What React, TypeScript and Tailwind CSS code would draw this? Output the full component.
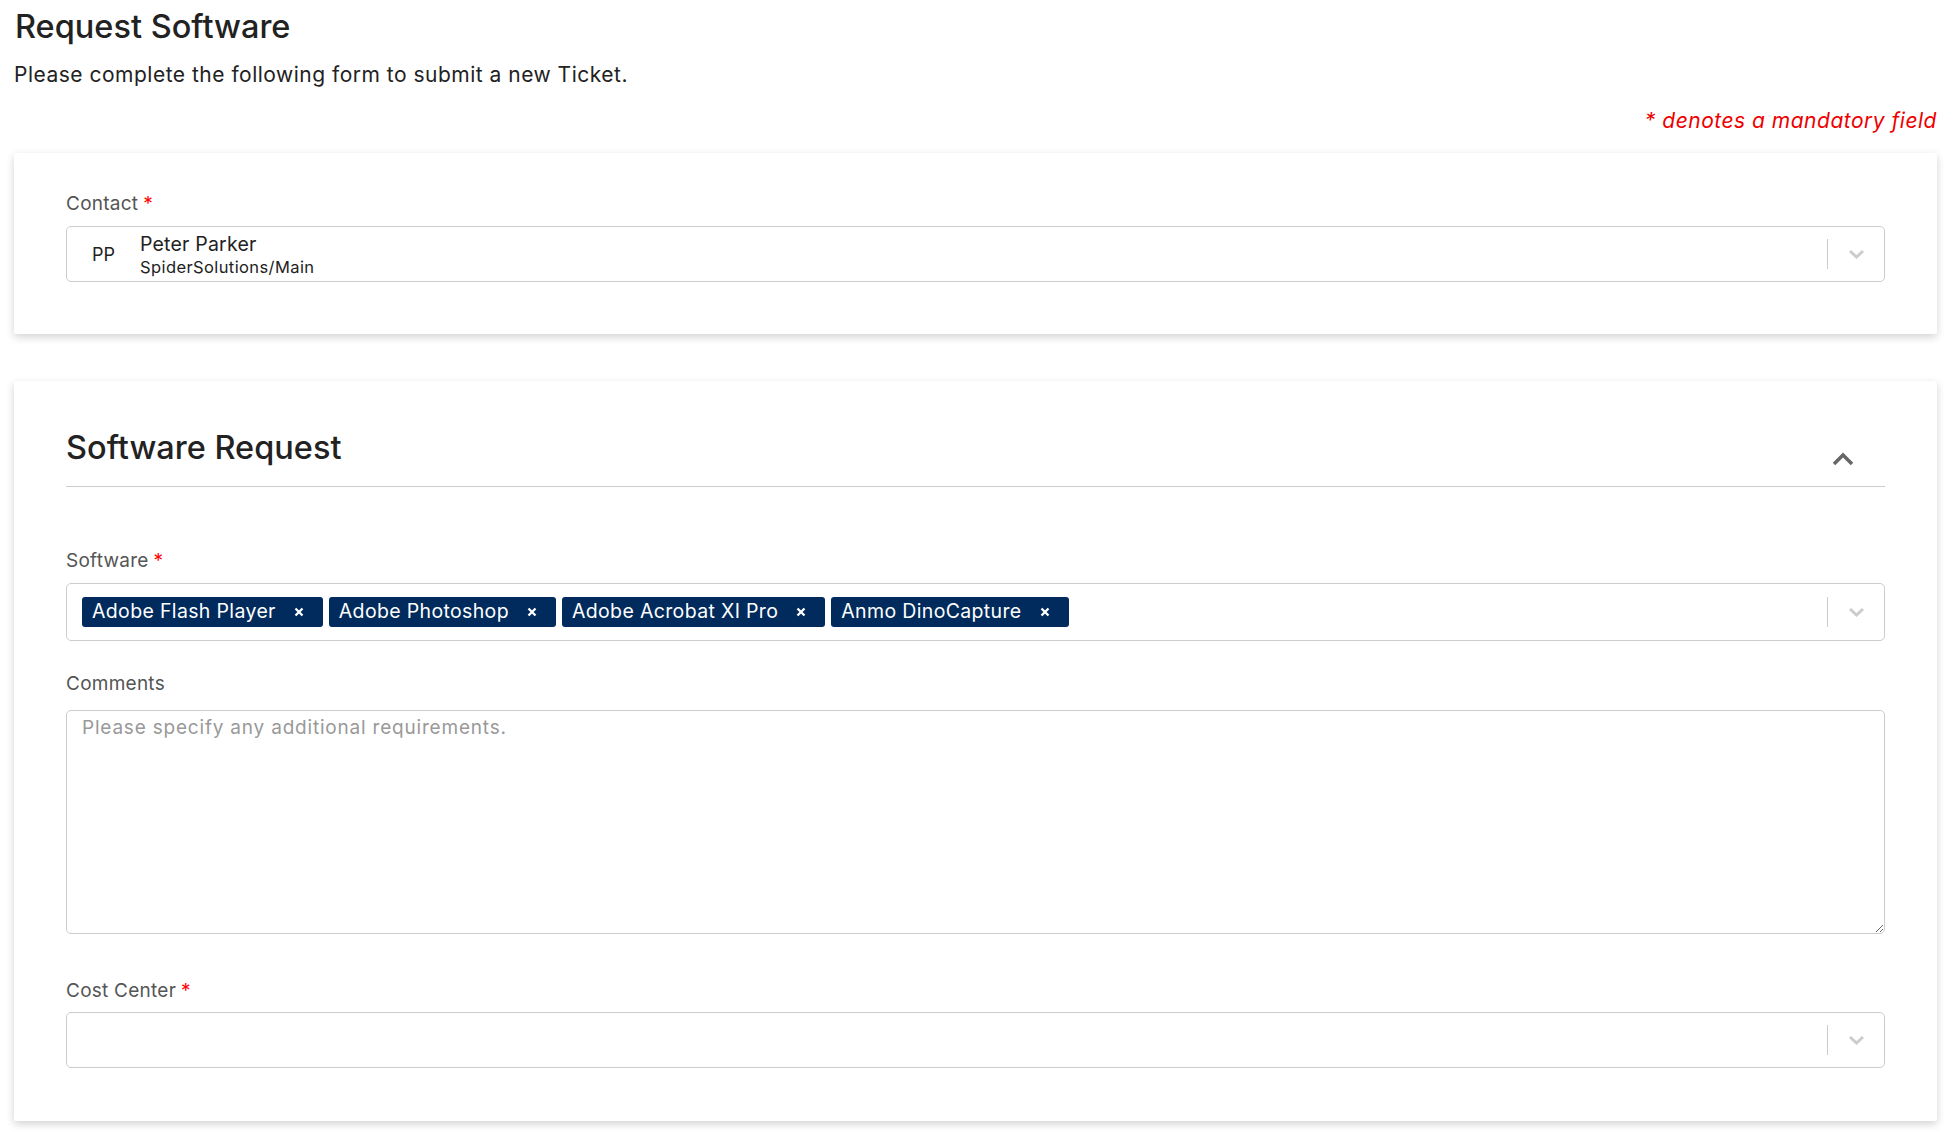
import React from "react";

const chips = [
  "Adobe Flash Player",
  "Adobe Photoshop",
  "Adobe Acrobat XI Pro",
  "Anmo DinoCapture",
];

const ChevronDown = () => (
  <svg width="17" height="10" viewBox="0 0 17 10" fill="none">
    <path d="M2 2l6.5 6 6.5-6" stroke="#cccccc" strokeWidth="3" />
  </svg>
);

const SelectIndicator = () => (
  <div className="flex items-center self-stretch">
    <span className="h-[30px] w-px bg-[#cccccc]" />
    <span className="flex w-[56px] items-center justify-center">
      <ChevronDown />
    </span>
  </div>
);

const Label: React.FC<{ text: string; required?: boolean }> = ({
  text,
  required,
}) => (
  <label className="block text-[19px] leading-[24px] tracking-[0.25px] text-[#555555]">
    {text}
    {required && <span className="ml-[5px] text-[#ff0000]">*</span>}
  </label>
);

const ChipX = () => (
  <svg width="10" height="10" viewBox="0 0 10 10" fill="none">
    <path d="M1.5 1.5l7 7M8.5 1.5l-7 7" stroke="white" strokeWidth="2.3" />
  </svg>
);

export default function App() {
  return (
    <div className="min-h-screen bg-white pl-[14px] pr-[17px] pt-[6px] pb-[10px] font-['Inter',sans-serif] text-[#222222]">
      <h1 className="pl-px text-[32.5px] font-medium leading-[42px]">
        Request Software
      </h1>
      <p className="mt-[12px] text-[21px] leading-[30px] tracking-[0.5px]">
        Please complete the following form to submit a new Ticket.
      </p>
      <p className="mt-[17px] text-right text-[21px] italic leading-[28px] tracking-[0.5px] text-[#ee0000]">
        * denotes a mandatory field
      </p>

      <section className="mt-[18px] rounded-[2px] bg-white px-[52px] pt-[39px] pb-[52px] shadow-[0_3px_8px_rgba(0,0,0,0.18)]">
        <Label text="Contact" required />
        <div className="mt-[10px] flex h-[56px] items-center rounded-[5px] border border-[#cccccc] bg-white">
          <div className="flex flex-1 items-center">
            <span className="ml-[25px] w-[48px] text-[18px] text-[#222222]">PP</span>
            <div className="flex flex-col">
              <span className="text-[19.5px] leading-[25px] tracking-[0.2px]">Peter Parker</span>
              <span className="text-[16.5px] leading-[20px] tracking-[0.4px]">SpiderSolutions/Main</span>
            </div>
          </div>
          <SelectIndicator />
        </div>
      </section>

      <section className="mt-[47px] rounded-[2px] bg-white px-[52px] pt-[47px] pb-[53px] shadow-[0_3px_8px_rgba(0,0,0,0.18)]">
        <div className="flex items-center justify-between border-b border-[#cccccc] pb-[18px]">
          <h2 className="text-[32.5px] font-medium leading-[40px]">
            Software Request
          </h2>
          <svg
            className="mr-[31px] mt-[22px]"
            width="22"
            height="14"
            viewBox="0 0 22 14"
            fill="none"
          >
            <path d="M2 12l9-9 9 9" stroke="#666666" strokeWidth="3.5" />
          </svg>
        </div>

        <div className="mt-[62px]">
          <Label text="Software" required />
          <div className="mt-[10px] flex h-[58px] items-center rounded-[5px] border border-[#cccccc] bg-white">
            <div className="flex flex-1 items-center gap-[6px] pl-[15px]">
              {chips.map((c) => (
                <span
                  key={c}
                  className="flex h-[30px] items-center gap-[18px] rounded-[3px] bg-[#002b5c] pl-[10px] pr-[19px] text-[19.5px] tracking-[0.35px] text-white"
                >
                  {c}
                  <ChipX />
                </span>
              ))}
            </div>
            <SelectIndicator />
          </div>
        </div>

        <div className="mt-[31px]">
          <Label text="Comments" />
          <textarea
            className="mt-[14px] block h-[224px] w-full rounded-[5px] border border-[#cccccc] px-[15px] py-[4px] text-[19px] leading-[26px] tracking-[0.8px] text-[#222222] outline-none placeholder:text-[#999999]"
            placeholder="Please specify any additional requirements."
          />
        </div>

        <div className="mt-[45px]">
          <Label text="Cost Center" required />
          <div className="mt-[9px] flex h-[56px] items-center rounded-[5px] border border-[#cccccc] bg-white">
            <div className="flex-1" />
            <SelectIndicator />
          </div>
        </div>
      </section>
    </div>
  );
}
